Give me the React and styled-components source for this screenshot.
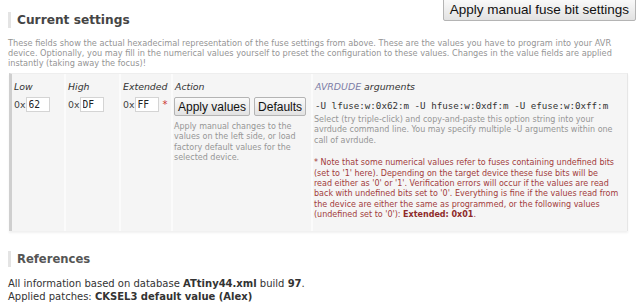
import styled, { createGlobalStyle } from "styled-components";

const GlobalStyle = createGlobalStyle`
  html, body {
    margin: 0;
    background: #fff;
  }
  body {
    font-family: "DejaVu Sans", Verdana, sans-serif;
    color: #333;
  }
`;

const Page = styled.div`
  width: 640px;
  box-sizing: border-box;
  padding: 0 8px;
`;

const TopBar = styled.div`
  display: flex;
  justify-content: space-between;
  align-items: flex-start;
`;

const SectionTitle = styled.h2`
  margin: ${(p) => p.$top}px 0 0;
  border-left: 3px solid #e4e4e4;
  padding-left: 6px;
  font: 700 ${(p) => p.$size}px/16px "DejaVu Sans", Verdana, sans-serif;
  color: ${(p) => p.$color};
`;

const Button = styled.button`
  font: ${(p) => p.$size}px/1 "Liberation Sans", Arial, sans-serif;
  color: #111;
  height: ${(p) => p.$height}px;
  padding: 0 ${(p) => p.$pad}px;
  border: 1px solid #b4b4b4;
  border-radius: 2px;
  background: linear-gradient(#fafafa, #e2e2e2);
  white-space: nowrap;
  cursor: pointer;
`;

const TopButton = styled(Button)`
  margin: -2px -4px 0 0;
`;

const Intro = styled.p`
  margin: 10px 0 0;
  max-width: 612px;
  font-size: 8.2px;
  line-height: 10px;
  color: #959595;
`;

const Panel = styled.div`
  margin: 5px 4px 0 1px;
  display: grid;
  grid-template-columns: 52px 53px 50px 138px 1fr;
  column-gap: 2px;
  background: #fbfbfb;
  border-left: 3px solid #cfcfcf;
  border-right: 1px solid #e6e6e6;
  border-top: 1px solid #eeeeee;
  box-shadow: 0 2px 2px rgba(0, 0, 0, 0.06);
`;

const HeadCell = styled.div`
  background: #f5f5f5;
  padding: 7px 2px 2px;
  font-size: 9.4px;
  line-height: 12px;
  font-style: italic;
  color: #333;
  white-space: nowrap;
`;

const Cell = styled.div`
  background: #f5f5f5;
  padding: 2px 2px ${(p) => p.$bottom || 0}px 1px;
`;

const FuseField = styled.div`
  display: flex;
  align-items: center;
  padding-left: 1px;
  font-size: 9.4px;
  color: #444;
`;

const HexInput = styled.input`
  width: 24px;
  height: 15px;
  box-sizing: border-box;
  padding: 0 2px;
  border: 1px solid #d4d4d4;
  background: #fff;
  font: 9.6px "DejaVu Sans Mono", monospace;
  color: #222;
`;

const Star = styled.span`
  color: #c33;
  margin-left: 4px;
  font-size: 10px;
`;

const ButtonRow = styled.div`
  display: flex;
  gap: 4px;
`;

const Hint = styled.p`
  margin: ${(p) => p.$top}px 0 0;
  font-size: 8px;
  line-height: 10.4px;
  color: ${(p) => (p.$warn ? "#a23c3c" : "#959595")};

  b {
    color: #8e2a2a;
    font-weight: 700;
  }
`;

const Command = styled.div`
  font: 9.2px/14px "DejaVu Sans Mono", monospace;
  color: #333;
  margin: 2px 0 0 1px;
  white-space: nowrap;
`;

const ToolName = styled.span`
  color: #7d7da6;
`;

const Info = styled.p`
  margin: ${(p) => p.$top}px 0 0;
  font-size: 10px;
  line-height: 13px;
  color: #333;
`;

const fuses = [
  { name: "Low", value: "62" },
  { name: "High", value: "DF" },
  { name: "Extended", value: "FF", star: true },
];

export default function App() {
  return (
    <Page>
      <GlobalStyle />
      <TopBar>
        <SectionTitle $top={12} $size={12.2} $color="#454545">
          Current settings
        </SectionTitle>
        <TopButton $size={13.5} $height={23} $pad={6}>
          Apply manual fuse bit settings
        </TopButton>
      </TopBar>
      <Intro>
        These fields show the actual hexadecimal representation of the fuse
        settings from above. These are the values you have to program into
        your AVR device. Optionally, you may fill in the numerical values
        yourself to preset the configuration to these values. Changes in the
        value fields are applied instantly (taking away the focus)!
      </Intro>
      <Panel>
        {fuses.map((f) => (
          <HeadCell key={f.name}>{f.name}</HeadCell>
        ))}
        <HeadCell>Action</HeadCell>
        <HeadCell>
          <ToolName>AVRDUDE</ToolName> arguments
        </HeadCell>

        {fuses.map((f) => (
          <Cell key={f.name}>
            <FuseField>
              0x
              <HexInput defaultValue={f.value} />
              {f.star && <Star>*</Star>}
            </FuseField>
          </Cell>
        ))}
        <Cell>
          <ButtonRow>
            <Button $size={12} $height={19} $pad={3}>
              Apply values
            </Button>
            <Button $size={12} $height={19} $pad={3}>
              Defaults
            </Button>
          </ButtonRow>
          <Hint $top={6}>
            Apply manual changes to the values on the left side, or load
            factory default values for the selected device.
          </Hint>
        </Cell>
        <Cell $bottom={10}>
          <Command>
            -U lfuse:w:0x62:m -U hfuse:w:0xdf:m -U efuse:w:0xff:m
          </Command>
          <Hint $top={2}>
            Select (try triple-click) and copy-and-paste this option string
            into your avrdude command line. You may specify multiple -U
            arguments within one call of avrdude.
          </Hint>
          <Hint $top={12} $warn>
            * Note that some numerical values refer to fuses containing
            undefined bits
            <br />
            (set to '1' here). Depending on the target device these fuse bits
            will be
            <br />
            read either as '0' or '1'. Verification errors will occur if the
            values are read
            <br />
            back with undefined bits set to '0'. Everything is fine if the
            values read from
            <br />
            the device are either the same as programmed, or the following
            values
            <br />
            (undefined set to '0'): <b>Extended: 0x01</b>.
          </Hint>
        </Cell>
      </Panel>
      <SectionTitle $top={20} $size={11.6} $color="#555">
        References
      </SectionTitle>
      <Info $top={10}>
        All information based on database <b>ATtiny44.xml</b> build <b>97</b>.
      </Info>
      <Info $top={0}>
        Applied patches: <b>CKSEL3 default value (Alex)</b>
      </Info>
    </Page>
  );
}
